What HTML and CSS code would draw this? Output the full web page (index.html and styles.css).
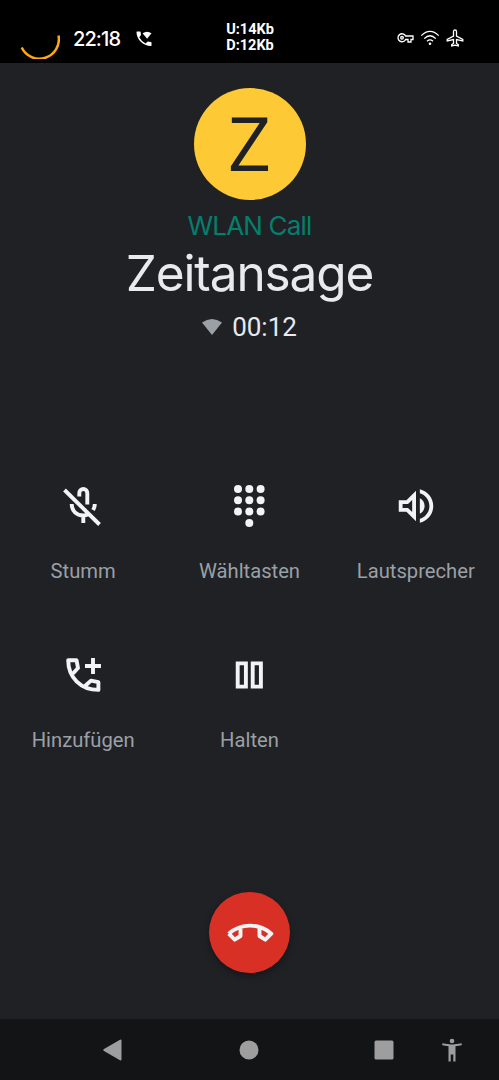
FILE: index.html
```html
<!DOCTYPE html>
<html lang="de">
<head>
    <meta charset="UTF-8">
    <meta name="viewport" content="width=device-width, initial-scale=1.0">
    <title>Zeitansage</title>
    <link rel="stylesheet" href="styles.css">
</head>
<body>
    <div class="status-bar">
        <div class="status-left">
            <svg class="ring" width="44" height="48" viewBox="0 0 44 48"><path d="M5.700 36.500A19.500 19.500 0 0 0 42.500 24.500" /></svg>
            <span class="clock">22:18</span>
            <svg class="wifi-call" width="16" height="16" viewBox="0 0 16 16">
                <path d="M.5 1Q.5 .5 1 .5H4Q4.5 .5 4.6 1L5 4L3.3 6.2Q5.3 10.2 9.6 12.4L11.7 10.6L15 11.1Q15.5 11.2 15.5 11.7V14.5Q15.5 15 15 15C7 15 .5 8.5 .5 1z"/>
                <path d="M6.6 2.2Q11 -.9 15.5 2.2L11.1 7.8z"/>
            </svg>
        </div>
        <div class="traffic">U:14Kb<br>D:12Kb</div>
        <div class="status-right">
            <svg width="17" height="12" viewBox="0 0 17 12">
                <path d="M8.6 4A4 4 0 1 0 8.6 7.5H11V10H14V7.5H16V4z"/>
                <circle cx="5" cy="5.8" r="1.3"/>
            </svg>
            <svg width="20" height="16" viewBox="0 0 20 16">
                <path d="M1.3 5.6Q10 -2.8 18.7 5.6M4.2 8.6Q10 3 15.8 8.6M7 11.2Q10 8.6 13 11.2"/>
                <circle class="dot" cx="10" cy="13.8" r="1.3"/>
            </svg>
            <svg width="18" height="18" viewBox="0 0 18 18">
                <path d="M7.5 2.5Q7.5 1 9 1T10.5 2.5V7L16.8 10.4V12L10.5 10.5V14.5L12.3 15.7V17L9 16.2L5.7 17V15.7L7.5 14.5V10.5L1.2 12V10.4L7.5 7z"/>
            </svg>
        </div>
    </div>

    <div class="call-info">
        <div class="avatar">Z</div>
        <div class="call-type">WLAN Call</div>
        <h1 class="caller">Zeitansage</h1>
        <div class="duration">
            <svg width="20" height="16" viewBox="0 0 20 16"><path d="M0 3.6Q10 -3.4 20 3.6L10 16z"/></svg>
            <span>00:12</span>
        </div>
    </div>

    <div class="actions">
        <div class="action">
            <svg class="line" width="46" height="46" viewBox="0 0 46 46">
                <path d="M19.3 13.5V10a4 4 0 0 1 8 0V21.5"/>
                <path d="M11.7 21C11.7 28 16.5 32.5 23.3 32.5Q26 32.5 28.5 31.3M34.8 21Q34.8 24.3 33 27M23.3 32V40"/>
                <path d="M4.5 7L39.5 41.5"/>
            </svg>
            <span>Stumm</span>
        </div>
        <div class="action">
            <svg class="solid" width="46" height="46" viewBox="0 0 46 46">
                <circle cx="12" cy="6" r="4"/><circle cx="23.3" cy="6" r="4"/><circle cx="34.6" cy="6" r="4"/>
                <circle cx="12" cy="17.3" r="4"/><circle cx="23.3" cy="17.3" r="4"/><circle cx="34.6" cy="17.3" r="4"/>
                <circle cx="12" cy="28.6" r="4"/><circle cx="23.3" cy="28.6" r="4"/><circle cx="34.6" cy="28.6" r="4"/>
                <circle cx="23.3" cy="40" r="4"/>
            </svg>
            <span>Wähltasten</span>
        </div>
        <div class="action">
            <svg class="solid" width="46" height="46" viewBox="0 0 24 24">
                <path d="M3 9v6h4l5 5V4L7 9H3zm7-.17v6.34L7.83 13H5v-2h2.83L10 8.83zM16.5 12c0-1.77-1.02-3.29-2.5-4.03v8.05c1.48-.73 2.5-2.25 2.5-4.02zM14 3.23v2.06c2.89.86 5 3.54 5 6.71s-2.11 5.85-5 6.71v2.06c4.01-.91 7-4.49 7-8.77s-2.99-7.86-7-8.77z"/>
            </svg>
            <span>Lautsprecher</span>
        </div>
        <div class="action">
            <svg class="line" width="46" height="46" viewBox="0 0 46 46">
                <path class="round" d="M13 21.5L18 16L16.5 8.200H8.2C8.2 25.5 21 37.9 38.4 37.9V30.2L31 28.6L25.3 33.8"/>
                <path d="M33 6V22M25 14H41"/>
            </svg>
            <span>Hinzufügen</span>
        </div>
        <div class="action">
            <svg class="line" width="46" height="46" viewBox="0 0 46 46">
                <path d="M11.7 11.4H19.9V34.6H11.7zM26.7 11.4H34.9V34.6H26.7z"/>
            </svg>
            <span>Halten</span>
        </div>
    </div>

    <div class="hangup">
        <svg class="line" width="48" height="20" viewBox="0 0 48 20">
            <path class="round" d="M2.7 10.7Q12 2.600 24 2.600T45.300 10.700L39.300 16.700L33.500 13V4.200M2.700 10.700L8.700 16.700L14.500 13V4.200"/>
        </svg>
    </div>

    <div class="nav-bar">
        <svg width="20" height="22" viewBox="0 0 20 22"><path d="M1 10L17 .8Q18.5 0 18.5 1.7V20.3Q18.5 22 17 21.2L1 12Q-.5 11 1 10z"/></svg>
        <svg width="20" height="20" viewBox="0 0 20 20"><circle cx="10" cy="10" r="9.500"/></svg>
        <svg width="20" height="20" viewBox="0 0 20 20"><rect x=".5" y=".5" width="19" height="19" rx="1.5"/></svg>
        <svg width="20" height="24" viewBox="0 0 20 24">
            <circle cx="10" cy="3" r="2.3"/>
            <path d="M.3 5.3Q10 7.5 19.7 5.3V7.3L13.5 8.3V23.5H11.3V16.5H8.7V23.5H6.5V8.3L.3 7.3z"/>
        </svg>
    </div>
</body>
</html>
```
FILE: styles.css
```css
body {
    margin: 0;
    height: 1080px;
    display: flex;
    flex-direction: column;
    overflow: hidden;
    background: #202125;
    color: #e8eaed;
    font-family: Roboto, sans-serif;
}
svg {
    display: block;
}
.status-bar {
    height: 63px;
    box-sizing: border-box;
    padding: 15px 35px 0 17px;
    display: grid;
    grid-template-columns: 209px 48px 1fr;
    background: #000;
    color: #fff;
}
.status-left {
    display: flex;
    align-items: center;
    height: 48px;
}
.ring {
    margin: -8px 0 0 -1px;
    fill: none;
    stroke: #ffa812;
    stroke-width: 2.5;
}
.clock {
    margin-left: 13px;
    width: 47px;
    font-family: Inter, sans-serif;
    font-size: 20px;
    font-weight: 500;
    letter-spacing: -0.9px;
    white-space: nowrap;
}
.wifi-call {
    margin-left: 16px;
    fill: #fff;
}
.traffic {
    padding-top: 7px;
    font-size: 14.5px;
    line-height: 15.5px;
    font-weight: 700;
    text-align: center;
}
.status-right {
    height: 46px;
    display: flex;
    align-items: center;
    justify-content: flex-end;
    gap: 6px;
    fill: none;
    stroke: #fff;
    stroke-width: 1.3;
}
.dot {
    fill: #fff;
    stroke: none;
}
.call-info {
    height: 408px;
    box-sizing: border-box;
    padding-top: 25px;
    display: flex;
    flex-direction: column;
    align-items: center;
}
.avatar {
    width: 112px;
    height: 112px;
    border-radius: 50%;
    background: #fdc935;
    color: #202125;
    font-family: "Open Sans", sans-serif;
    font-size: 75px;
    line-height: 109px;
    text-align: center;
}
.call-type {
    margin-top: 10px;
    font-family: Inter, sans-serif;
    font-size: 26px;
    font-weight: 400;
    letter-spacing: -0.8px;
    line-height: 32px;
    color: #047f6c;
}
.caller {
    margin: 0;
    font-family: Inter, sans-serif;
    font-size: 49.5px;
    letter-spacing: -1.1px;
    line-height: 62px;
    font-weight: 400;
}
.duration {
    display: flex;
    align-items: center;
    gap: 10px;
    height: 46px;
    font-size: 26px;
}
.duration svg {
    fill: #9aa0a6;
}
.actions {
    height: 421px;
    display: grid;
    grid-template-columns: repeat(3, 1fr);
    grid-auto-rows: 169px;
}
.action {
    padding-top: 12px;
    display: flex;
    flex-direction: column;
    align-items: center;
    gap: 30px;
    font-size: 20.2px;
    line-height: 25px;
    color: #9aa0a6;
}
.line {
    fill: none;
    stroke: #f1f3f4;
    stroke-width: 3.9;
}
.round {
    stroke-linejoin: round;
}
.solid {
    fill: #f1f3f4;
}
.hangup {
    width: 81px;
    height: 81px;
    margin: 0 auto;
    border-radius: 50%;
    display: flex;
    align-items: center;
    justify-content: center;
    background: #d93026;
    box-shadow: 0 3px 7px rgba(0, 0, 0, 0.35);
}
.nav-bar {
    height: 61px;
    box-sizing: border-box;
    margin-top: auto;
    padding-left: 103px;
    display: grid;
    grid-template-columns: 136px 135px 68px 20px;
    align-items: center;
    background: #131416;
    fill: #9e9e9e;
}
```
